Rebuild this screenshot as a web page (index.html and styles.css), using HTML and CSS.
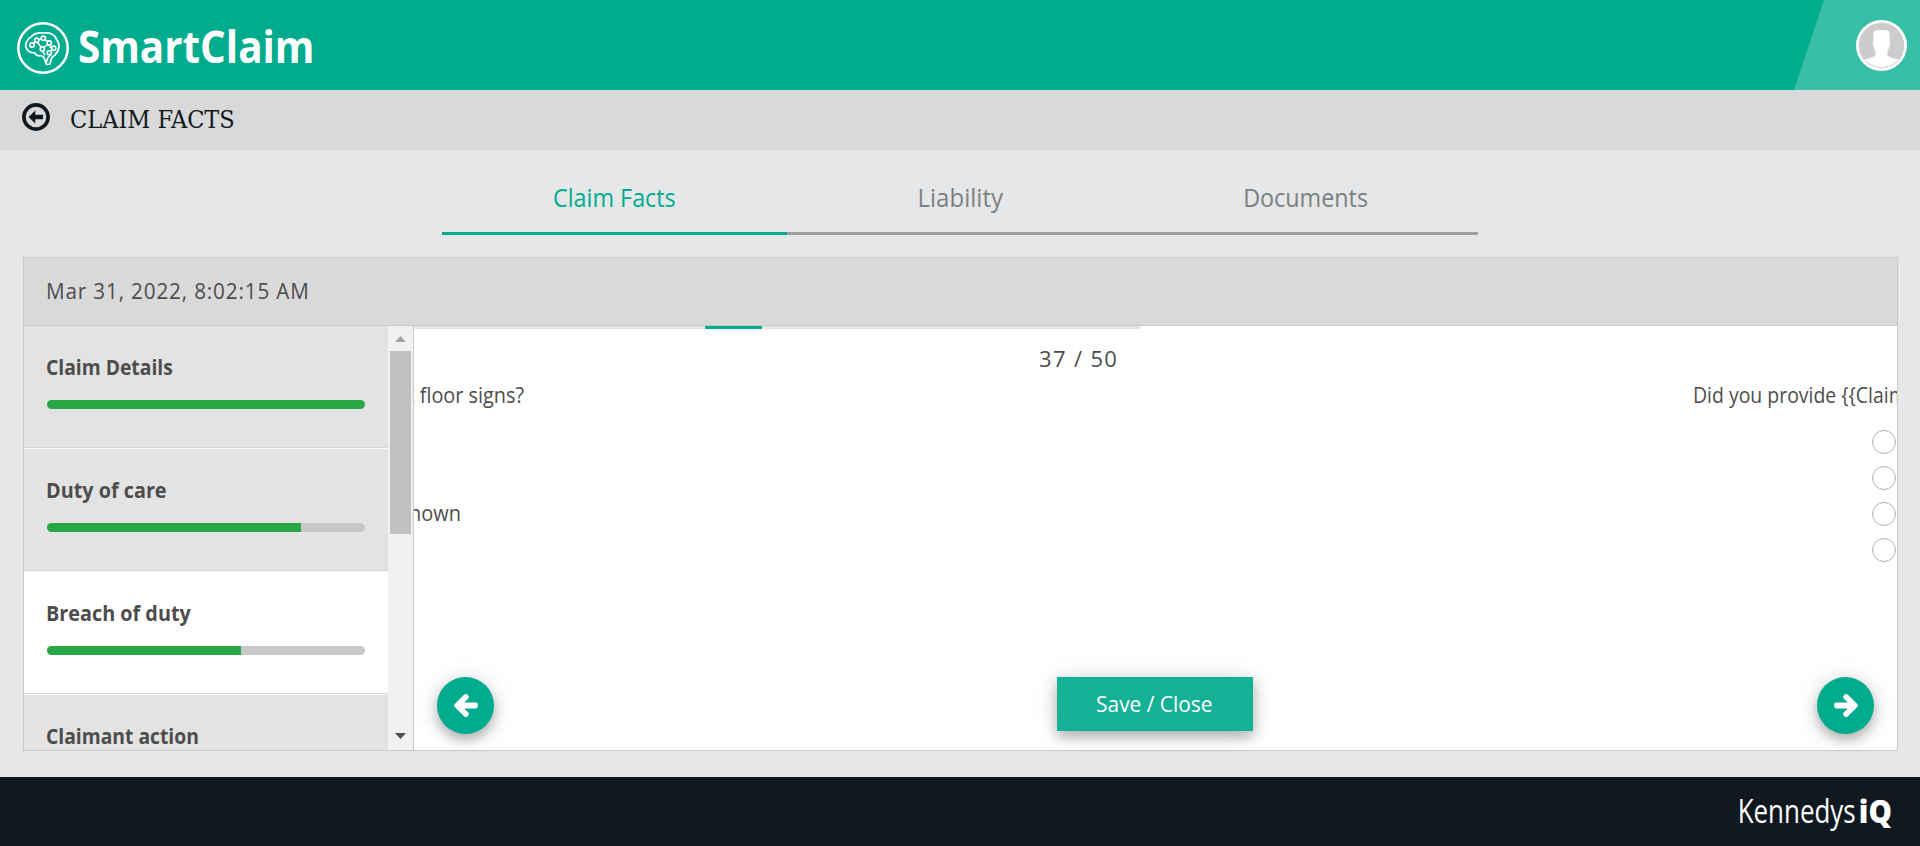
FILE: index.html
```
<!DOCTYPE html>
<html lang="en">
<head>
<meta charset="utf-8">
<title>SmartClaim</title>
<link rel="stylesheet" href="styles.css">
</head>
<body>
<header class="header">
  <div class="brand">
    <svg class="brand-icon" viewBox="0 0 52 52" fill="none" stroke="#fff" stroke-linejoin="round">
      <circle cx="26" cy="26" r="24.7" stroke-width="2.5"/>
      <path stroke-width="1.7" d="M9.500 26.500C7.500 23 9.500 17 14 15C17 10.500 23 10.500 27 11C33 10 38.500 13 39.500 17.500C43 21 42.500 29 39 31.500C38 34 35.500 34.500 34.500 36L33 42L29.500 42.500L28 38.500C27.500 35.500 26.500 34.500 24.500 33.500C21 34.500 18.500 33 17.500 30.500C14 31.500 11.500 29.500 9.500 26.500Z"/>
      <path stroke-width="1.500" d="M29 41L31 35.500L34 32.500M16.500 21.500L18.500 19.500M21.500 17.800L24.300 17M28 17.500L31 20M20.500 20.500L24.500 25.500M31 22.500L26.500 25.500M25.500 29L28 33M33.500 29.500L35.500 27.500M34.500 25.500L32.500 24.500"/>
      <g fill="#00ab8e" stroke-width="1.700"><circle cx="15" cy="23" r="2.100"/><circle cx="19.700" cy="18.300" r="2.100"/><circle cx="26.300" cy="16.300" r="2.100"/><circle cx="32.300" cy="21" r="2.100"/><circle cx="25.300" cy="27" r="2.100"/><circle cx="32.300" cy="30.700" r="2.100"/><circle cx="36.700" cy="26.300" r="2.100"/></g>
    </svg>
    <span class="brand-name">SmartClaim</span>
  </div>
  <div class="user">
    <svg class="avatar" viewBox="0 0 51 51">
      <circle cx="25.500" cy="25.500" r="25.500" fill="#fff"/>
      <circle cx="25.500" cy="25.500" r="22.700" fill="#ccc"/>
      <path fill="#fff" d="M17.500 13C17.500 10.500 20 10 25.500 10C31 10 33.500 10.500 33.500 13L34 24C34 27 32 29.500 31.500 31V35.500C34 38 39 38.500 42.500 39.500C38.500 44.500 32 47.500 25.500 47.500C19 47.500 12.500 44.500 8.500 39.500C12 38.500 17 38 19.500 35.500V31C19 29.500 17 27 17 24Z"/>
      <path fill="none" stroke="#ddd" d="M10 41.500Q25.500 54 41 41.500"/>
    </svg>
  </div>
</header>

<div class="crumb">
  <svg class="back" viewBox="0 0 27 27">
    <circle cx="13.500" cy="13.500" r="11.700" fill="none" stroke="#101820" stroke-width="3.500"/>
    <path fill="#101820" d="M6.300 13.500L12.800 7.200V11.300H20.300V15.700H12.800V19.800Z"/>
  </svg>
  <h1 class="crumb-title">CLAIM FACTS</h1>
</div>

<main class="main">
  <nav class="tabs">
    <a class="tab tab-active"><span class="tab-text">Claim Facts</span></a>
    <a class="tab"><span class="tab-text tab-text-wide">Liability</span></a>
    <a class="tab"><span class="tab-text">Documents</span></a>
  </nav>

  <section class="panel">
    <div class="panel-head"><span class="date">Mar 31, 2022, 8:02:15 AM</span></div>
    <div class="panel-body">
      <aside class="side">
        <div class="items">
          <div class="item"><div class="item-title narrow">Claim Details</div><div class="bar"><div class="bar-fill" style="width:100%"></div></div></div>
          <div class="item"><div class="item-title">Duty of care</div><div class="bar"><div class="bar-fill" style="width:80%"></div></div></div>
          <div class="item item-active"><div class="item-title">Breach of duty</div><div class="bar"><div class="bar-fill" style="width:61%"></div></div></div>
          <div class="item"><div class="item-title narrow">Claimant action</div></div>
        </div>
        <div class="scroll">
          <svg class="scroll-up" viewBox="0 0 11 6"><path d="M0 6L5.500 0L11 6Z" fill="#a3a3a3"/></svg>
          <div class="thumb"></div>
          <svg class="scroll-down" viewBox="0 0 11 6"><path d="M0 0H11L5.500 6Z" fill="#505050"/></svg>
        </div>
      </aside>
      <div class="pane">
        <div class="slides">
          <div class="strip"><div class="strip-on"></div></div>
          <div class="counter">37 / 50</div>
          <div class="row">
            <div class="slide">
              <div class="question question-prev">wet floor signs?</div>
              <div class="option-prev">Unknown</div>
            </div>
            <div class="slide slide-next">
              <div class="question">Did you provide {{Claimant</div>
              <div class="radios">
                <span class="radio"></span><span class="radio"></span><span class="radio"></span><span class="radio"></span>
              </div>
            </div>
          </div>
        </div>
        <div class="actions">
          <button class="round"><svg class="arrow" viewBox="0 0 448 512"><path fill="#fff" d="M257.500 445.100l-22.200 22.200c-9.400 9.400-24.600 9.400-33.900 0L7 273c-9.400-9.400-9.400-24.600 0-33.900L201.400 44.700c9.400-9.400 24.600-9.400 33.900 0l22.200 22.200c9.500 9.500 9.300 25-.4 34.300L136.600 216H424c13.300 0 24 10.700 24 24v32c0 13.300-10.700 24-24 24H136.600l120.500 114.800c9.800 9.300 10 24.800.4 34.300z"/></svg></button>
          <button class="save"><span class="save-text">Save / Close</span></button>
          <button class="round"><svg class="arrow arrow-next" viewBox="0 0 448 512"><path fill="#fff" d="M257.500 445.100l-22.200 22.200c-9.400 9.400-24.600 9.400-33.900 0L7 273c-9.400-9.400-9.400-24.600 0-33.900L201.400 44.700c9.400-9.400 24.600-9.400 33.900 0l22.200 22.200c9.500 9.500 9.300 25-.4 34.300L136.600 216H424c13.300 0 24 10.700 24 24v32c0 13.300-10.700 24-24 24H136.600l120.500 114.800c9.800 9.300 10 24.800.4 34.300z"/></svg></button>
        </div>
      </div>
    </div>
  </section>
</main>

<footer class="footer"><span class="kennedys">Kennedys</span><span class="iq">iQ</span></footer>
</body>
</html>
```
FILE: styles.css
```
* { box-sizing: border-box; }
body {
  margin: 0;
  height: 846px;
  overflow: hidden;
  display: flex;
  flex-direction: column;
  background: #e6e7e9;
  color: #4d4d4d;
  font: 22px "Open Sans", "Noto Sans", sans-serif;
}
svg { display: block; flex: none; }

.header { height: 90px; display: flex; justify-content: space-between; background: #00ab8e; }
.brand { display: flex; align-items: center; padding-left: 17px; }
.brand-icon { width: 52px; height: 52px; margin: 6px 9px 0 0; }
.brand-name { color: #fff; font-size: 45px; font-weight: 700; line-height: 88px; padding-top: 2px; transform: scaleX(.897); transform-origin: left; }
.user {
  width: 126px;
  display: flex;
  align-items: center;
  justify-content: flex-end;
  padding-right: 13px;
  background: #37bea6;
  clip-path: polygon(30px 0, 100% 0, 100% 100%, 0 100%);
}
.avatar { width: 51px; height: 51px; }

.crumb { height: 60px; display: flex; align-items: flex-start; padding-left: 22px; background: #d9d9d9; color: #101820; }
.back { width: 28px; height: 28px; margin-top: 12.500px; }
.crumb-title {
  margin: 0 0 0 20px;
  font: 400 25px/59px "DejaVu Serif", serif;
  font-stretch: 75%;
}

.main { height: 627px; padding: 22px 22px 0 23px; }
.tabs { width: 1036px; margin-left: 419px; display: flex; }
.tab {
  flex: 1;
  padding-bottom: 10px;
  border-bottom: 3px solid #9e9e9e;
  color: #7b8082;
  font-size: 26px;
  line-height: 50px;
  text-align: center;
}
.tab-text { display: inline-block; transform: scaleX(.897); }
.tab-text-wide { transform: scaleX(.925); }
.tab-active { border-color: #00ab8e; color: #00ab8e; }

.panel { height: 494px; margin-top: 22px; display: flex; flex-direction: column; border: 1px solid #cacaca; }
.panel-head {
  height: 68px;
  flex: none;
  padding-left: 22px;
  border-bottom: 1px solid #cacaca;
  background: #d9d9d9;
  line-height: 65px;
}
.date { display: inline-block; letter-spacing: .9px; transform: scaleX(.94); transform-origin: left; }
.panel-body { flex: 1; min-height: 0; display: flex; }
.side { width: 390px; flex: none; display: flex; border-right: 1px solid #cacaca; }
.items { width: 364px; overflow: hidden; }
.item {
  height: 123px;
  padding: 26px 23px 0;
  background: linear-gradient(#d6d6d6, #d6d6d6) 0 121px / 100% 1px no-repeat, #e3e3e3;
  border-bottom: 1px solid #f7f7f7;
}
.item-active { background-color: #fff; }
.item-title { font-weight: 700; line-height: 29px; transform: scaleX(.9); transform-origin: left; margin-left: -1px; }
.narrow { transform: scaleX(.877); }
.bar { height: 9px; margin-top: 19px; border-radius: 4.500px; overflow: hidden; background: #c8c8c8; }
.bar-fill { height: 100%; background: #28a745; }
.scroll { width: 25px; display: flex; flex-direction: column; align-items: center; background: #f1f1f1; padding: 10px 0 11px; }
.scroll-up, .scroll-down { width: 11px; height: 6px; }
.thumb { width: 21px; height: 183px; margin-top: 9px; background: #c1c1c1; }
.scroll-down { margin-top: auto; }

.pane { flex: 1; min-width: 0; display: flex; flex-direction: column; background: #fff; }
.slides { height: 320px; overflow: hidden; }
.strip { width: 726px; height: 3px; padding-left: 291px; background: #e4e4e4; }
.strip-on { width: 57px; height: 3px; border-radius: 1px; background: #00ab8e; }
.counter { margin: 13px 0 0 625px; letter-spacing: 1.350px; line-height: 33px; }
.row { display: flex; justify-content: space-between; padding-top: 5px; font-size: 21px; line-height: 30px; white-space: nowrap; }
.slide { width: 110px; }
.question { transform: scaleX(.925); transform-origin: left; }
.question-prev { display: flex; justify-content: flex-end; transform: scaleX(.945); transform-origin: right; }
.option-prev { width: 47px; margin-top: 88px; display: flex; justify-content: flex-end; transform: scaleX(.95); transform-origin: right; }
.slide-next { width: 204px; }
.radios { padding: 20px 0 0 179px; display: flex; flex-direction: column; gap: 12px; }
.radio { width: 24px; height: 24px; border: 1px solid #a9b1ba; border-radius: 50%; }

.actions { display: flex; justify-content: space-between; padding: 31px 23px 0; }
.round, .save {
  border: 0;
  padding: 0;
  color: #fff;
  background: #00ab8e;
  box-shadow: 0 6px 12px rgba(0, 0, 0, .25), 0 2px 26px rgba(0, 0, 0, .13);
}
.round { width: 57px; height: 57px; border-radius: 50%; display: flex; align-items: center; justify-content: center; }
.arrow { width: 22px; height: 25px; overflow: visible; stroke: #fff; stroke-width: 38px; }
.arrow-next { transform: scaleX(-1); }
.save { width: 196px; height: 54px; margin-right: 2px; background: #14b197; font: inherit; line-height: 52px; padding-bottom: 2px; }
.save-text { display: inline-block; transform: scaleX(.95); }

.footer {
  flex: 1;
  display: flex;
  align-items: center;
  justify-content: flex-end;
  padding: 0 28px 2px 0;
  background: #101820;
  color: #fff;
  font-size: 32px;
}
.kennedys { font-weight: 500; transform: scaleX(.81); transform-origin: right; }
.iq { font-weight: 800; transform: scaleX(.92); transform-origin: right; }
```
